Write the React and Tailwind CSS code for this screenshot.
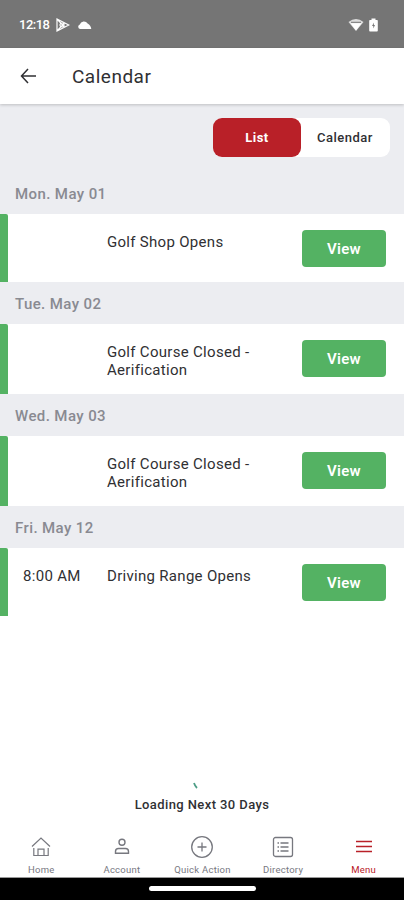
import React, { useState } from 'react';
import clsx from 'clsx';

const days = [
  { date: 'Mon. May 01', time: '', title: 'Golf Shop Opens', height: 'h-[68px]' },
  { date: 'Tue. May 02', time: '', title: 'Golf Course Closed - Aerification', height: 'h-[70px]' },
  { date: 'Wed. May 03', time: '', title: 'Golf Course Closed - Aerification', height: 'h-[70px]' },
  { date: 'Fri. May 12', time: '8:00 AM', title: 'Driving Range Opens', height: 'h-[68px]' }
];

const HomeIcon = () => (
  <svg width="20" height="22" viewBox="0 0 20 22" fill="none" stroke="currentColor" strokeWidth="1.2">
    <path d="M1 10.500 10 2l9 8.500" />
    <path d="M2.800 12v7.500h14.400V12M7 19.500v-6.300h6v6.300" />
  </svg>
);

const AccountIcon = () => (
  <svg width="20" height="22" viewBox="0 0 20 22" fill="none" stroke="currentColor" strokeWidth="1.4">
    <circle cx="10" cy="6.300" r="3" />
    <path d="M3.500 17.300v-1.800q0-3 3-3h7q3 0 3 3v1.800z" />
  </svg>
);

const QuickIcon = () => (
  <svg width="24" height="24" viewBox="0 0 24 24" fill="none" stroke="currentColor" strokeWidth="1.3">
    <circle cx="12" cy="12" r="10.300" />
    <path d="M12 7.500v9M7.500 12h9" />
  </svg>
);

const DirectoryIcon = () => (
  <svg width="22" height="22" viewBox="0 0 22 22" fill="none" stroke="currentColor" strokeWidth="1.3">
    <rect x="1.500" y="1.500" width="19" height="19" rx="2" />
    <path d="M5.500 7H7M5.500 11H7M5.500 15H7M8.500 7h8M8.500 11h8M8.500 15h8" />
  </svg>
);

const MenuIcon = () => (
  <svg width="18" height="22" viewBox="0 0 18 22" stroke="currentColor" strokeWidth="1.6">
    <path d="M1 5.500h16M1 10.500h16M1 15.500h16" />
  </svg>
);

const tabs = [
  { label: 'Home', icon: HomeIcon },
  { label: 'Account', icon: AccountIcon },
  { label: 'Quick Action', icon: QuickIcon },
  { label: 'Directory', icon: DirectoryIcon },
  { label: 'Menu', icon: MenuIcon, active: true }
];

const StatusBar = () => (
  <div className="flex h-12 shrink-0 items-center bg-[#757575] pl-[19px] pr-[26px] pt-0.5 text-white">
    <span className="w-[32px] whitespace-nowrap text-[13px] font-medium tracking-[-0.5px]">12:18</span>
    <svg className="ml-[5px]" width="14" height="14" viewBox="0 0 14 14" fill="none" stroke="currentColor" strokeWidth="1.200">
      <path d="M1 1 12.800 7 1 13zM1 1l7.500 8.200M1 13l7.500-8.200" />
      <circle cx="6" cy="7" r="2" />
    </svg>
    <svg className="ml-[7px]" width="15" height="10" viewBox="0 0 15 10" fill="currentColor">
      <path d="M3 9a2.400 2.400 0 0 1-.2-4.600A4.300 4.300 0 0 1 10.600 3.500Q13.800 5 14.300 9z" />
    </svg>
    <svg className="ml-auto" width="16" height="14" viewBox="0 0 16 14">
      <path d="M.5 4Q8-2 15.500 4L8 13z" fill="#ddd" />
      <path d="M3 4.300h10" stroke="#757575" strokeWidth="1" />
      <path d="M2.500 5.200h11L8 12.500z" fill="#fff" />
    </svg>
    <svg className="ml-[5px]" width="9" height="14" viewBox="0 0 9 14">
      <path d="M2.500 2V.5h4V2H8q.8 0 .8.800v9.700q0 1-.8 1H1q-.8 0-.8-1V2.800Q.2 2 1 2z" fill="#fff" />
      <path d="M5 4.500 3 8h1.300v2.500L6 7H4.800z" fill="#757575" />
    </svg>
  </div>
);

const App = () => {
  const [view, setView] = useState('List');

  return (
    <div className="flex h-[900px] w-[404px] flex-col overflow-hidden bg-white font-[Roboto,sans-serif] text-[#303033]">
      <StatusBar />

      <header className="z-10 flex h-14 shrink-0 items-center bg-white pl-5 shadow-[0_1px_3px_rgba(0,0,0,0.2)]">
        <button aria-label="Back">
          <svg width="16" height="16" viewBox="0 0 16 16" fill="none" stroke="currentColor" strokeWidth="1.500">
            <path d="M8 1 1.500 8 8 15M1.500 8H16" />
          </svg>
        </button>
        <h1 className="ml-9 pt-0.5 text-[19px] tracking-[0.5px]">Calendar</h1>
      </header>

      <div className="flex h-[68px] shrink-0 justify-end bg-[#ecedf1] pr-3.5 pt-3.5">
        <div className="flex h-[39px] w-[177px] rounded-[9px] bg-white text-[13px] font-medium tracking-[0.5px]">
          {['List', 'Calendar'].map((name) => (
            <button
              key={name}
              onClick={() => setView(name)}
              className={clsx('h-full w-[88px] rounded-[9px] pt-px', view === name && 'bg-[#b92028] font-bold text-white')}
            >
              {name}
            </button>
          ))}
        </div>
      </div>

      <main className="flex-1">
        {days.map((day) => (
          <section key={day.date}>
            <h2 className="flex h-[42px] items-center bg-[#ecedf1] pl-[15px] pt-0.5 text-[15px] font-medium tracking-[0.4px] text-[#898a91]">
              {day.date}
            </h2>
            <div className={clsx('flex items-start', day.height)}>
              <div className="h-full w-2 shrink-0 rounded-tr-[2px] bg-[#54b263]" />
              <span className="w-[99px] pl-[15px] pt-[19px] text-[15px] leading-[18px] tracking-[0.3px]">{day.time}</span>
              <p className="w-[175px] pt-[19px] text-[15px] leading-[18px] tracking-[0.3px]">{day.title}</p>
              <button className="ml-5 mt-4 h-[37px] w-[84px] rounded-[4px] bg-[#54b263] pt-0.5 text-[15px] font-semibold tracking-[0.3px] text-white">
                View
              </button>
            </div>
          </section>
        ))}
      </main>

      <div className="flex h-[54px] shrink-0 flex-col items-center">
        <svg className="mr-[13px] mt-1.5" width="5" height="7" viewBox="0 0 5 7">
          <path d="M1 1q1 3 3 5" stroke="#4d9d86" strokeWidth="1.800" fill="none" />
        </svg>
        <p className="mt-1.5 text-[13px] font-medium tracking-[0.4px]">Loading Next 30 Days</p>
      </div>

      <nav className="grid h-[48px] shrink-0 grid-cols-5 overflow-hidden border-b border-[#999] pl-px">
        {tabs.map(({ label, icon: Icon, active }) => (
          <button
            key={label}
            className={clsx('flex flex-col items-center text-[9.500px] leading-[12px]', active ? 'text-[#b92028]' : 'text-[#77787f]')}
          >
            <span className="flex h-[33px] items-center"><Icon /></span>
            <span className="mt-px whitespace-nowrap tracking-[0.25px]">{label}</span>
          </button>
        ))}
      </nav>

      <div className="flex h-[22px] shrink-0 justify-center bg-black pt-2">
        <div className="h-[5px] w-[107px] rounded-full bg-white" />
      </div>
    </div>
  );
};

export default App;
